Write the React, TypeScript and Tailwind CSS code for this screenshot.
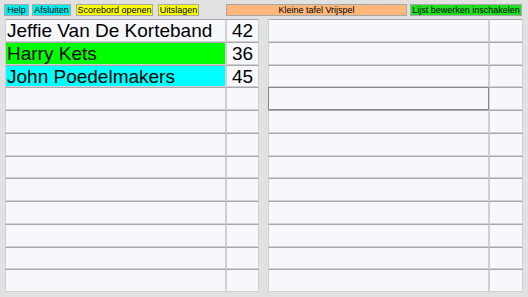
import React from "react";

type Row = { name: string; score: string; bg: string };

const leftRows: Row[] = [
  { name: "Jeffie Van De Korteband", score: "42", bg: "bg-[#f7f8fc]" },
  { name: "Harry Kets", score: "36", bg: "bg-[#00ff00]" },
  { name: "John Poedelmakers", score: "45", bg: "bg-[#00ffff]" },
];

const ROWS = 12;

function Cell({ text, bg, center, focused }: { text?: string; bg?: string; center?: boolean; focused?: boolean }) {
  return (
    <div
      className={
        "h-full border overflow-hidden whitespace-nowrap text-[19px] leading-[21px] text-black px-[1px] " +
        (focused ? "border-[#888888] " : "border-[#d0d0d4] border-t-[#a8a8ac] ") +
        (center ? "text-center " : "") +
        (bg ?? "bg-[#f7f8fc]")
      }
    >
      {text}
    </div>
  );
}

function Table({ rows, focusRow }: { rows: Row[]; focusRow?: number }) {
  return (
    <div className="grid grid-cols-[221px_1fr] grid-rows-[repeat(12,22.75px)]">
      {Array.from({ length: ROWS }).map((_, i) => {
        const r = rows[i];
        return (
          <React.Fragment key={i}>
            <Cell text={r?.name} bg={r?.bg} focused={focusRow === i} />
            <Cell text={r?.score} center />
          </React.Fragment>
        );
      })}
    </div>
  );
}

function Btn({ label, className }: { label: string; className: string }) {
  return (
    <button
      className={
        "h-[12px] border border-[#a8a8a8] p-0 text-[9px] leading-[10px] text-black whitespace-nowrap overflow-hidden text-center " +
        className
      }
    >
      {label}
    </button>
  );
}

export default function App() {
  return (
    <div
      className="w-[528px] h-[297px] bg-[#e1e1e1] overflow-hidden"
      style={{ fontFamily: '"Liberation Sans", Arial, sans-serif' }}
    >
      <div className="flex items-start pt-[4px] pl-[4px] h-[19px]">
        <Btn label="Help" className="w-[25px] bg-[#00eeee]" />
        <Btn label="Afsluiten" className="w-[39px] ml-[3px] bg-[#00eeee]" />
        <Btn label="Scorebord openen" className="w-[77px] ml-[5px] bg-[#ffff00]" />
        <Btn label="Uitslagen" className="w-[41px] ml-[5px] bg-[#ffff00]" />
        <Btn label="Kleine tafel Vrijspel" className="w-[181px] ml-[27px] bg-[#ffb77a]" />
        <Btn label="Lijst bewerken inschakelen" className="w-[112px] ml-[3px] bg-[#1ee01e]" />
      </div>
      <div className="flex pl-[5px] gap-[9px]">
        <div className="w-[254px]">
          <Table rows={leftRows} />
        </div>
        <div className="w-[255px]">
          <Table rows={[]} focusRow={3} />
        </div>
      </div>
    </div>
  );
}
